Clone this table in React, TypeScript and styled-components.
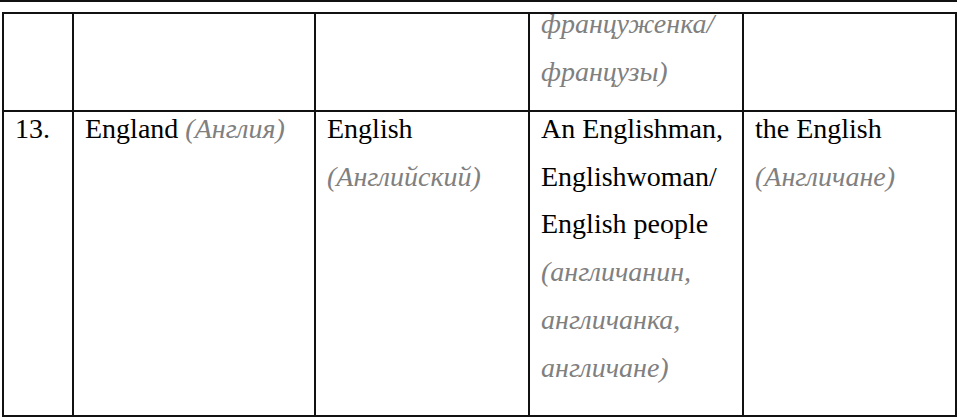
import * as React from 'react'
import styled, { createGlobalStyle } from 'styled-components'

const GlobalStyle = createGlobalStyle`
    html, body {
        margin: 0;
        padding: 0;
        background: #fff;
        color: #000;
    }
`

const Page = styled.div`
    width: 960px;
    height: 419px;
    overflow: hidden;
    background: #fff;
`

const TopRule = styled.div`
    width: 957px;
    height: 2px;
    background: #111;
    margin-bottom: 10px;
`

const Table = styled.div`
    display: grid;
    grid-template-columns: 70px 242px 214px 214px 213px;
    margin-left: 2px;
    border-top: 2px solid #111;
    border-left: 2px solid #111;
    width: max-content;
`

const Cell = styled.div<{ $height: number }>`
    box-sizing: border-box;
    height: ${props => props.$height}px;
    border-right: 2px solid #111;
    border-bottom: 2px solid #111;
    padding: 0 4px 0 11px;
`

const Content = styled.div<{ $shift: number }>`
    margin-top: ${props => props.$shift}px;
    width: calc(100% * 6 / 7);
    font-family: "Liberation Serif", "Times New Roman", serif;
    font-size: 24px;
    line-height: 40.97px;
    transform: scale(1.16667);
    transform-origin: 0 0;
`

const Note = styled.i`
    color: #808080;
`

type Row = {
    height: number
    shift: number
    cells: React.ReactNode[]
}

const rows: Row[] = [
    {
        height: 98,
        shift: -14,
        cells: [
            null,
            null,
            null,
            <Note>француженка/ французы)</Note>,
            null,
        ],
    },
    {
        height: 305,
        shift: -7,
        cells: [
            '13.',
            <>
                England <Note>(Англия)</Note>
            </>,
            <>
                English <Note>(Английский)</Note>
            </>,
            <>
                An Englishman, Englishwoman/ English people{' '}
                <Note>(англичанин, англичанка, англичане)</Note>
            </>,
            <>
                the English <Note>(Англичане)</Note>
            </>,
        ],
    },
]

export default function App() {
    return (
        <Page>
            <GlobalStyle />
            <TopRule />
            <Table>
                {rows.map((row, r) =>
                    row.cells.map((cell, c) => (
                        <Cell key={`${r}-${c}`} $height={row.height}>
                            <Content $shift={row.shift}>{cell}</Content>
                        </Cell>
                    ))
                )}
            </Table>
        </Page>
    )
}
